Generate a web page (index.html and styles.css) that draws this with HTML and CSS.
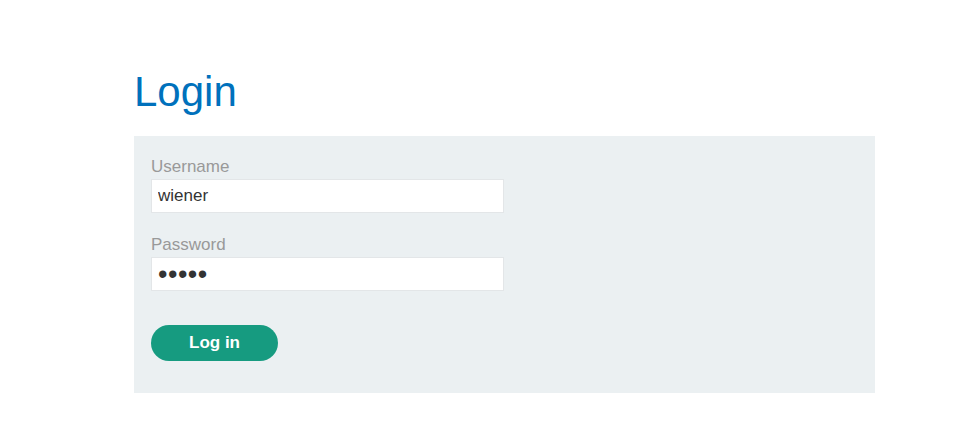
FILE: index.html
```html
<!DOCTYPE html>
<html lang="en">
<head>
<meta charset="utf-8">
<title>Login</title>
<link rel="stylesheet" href="styles.css">
</head>
<body>
<main class="container">
  <h1 class="title">Login</h1>
  <section class="panel">
    <form class="login-form">
      <label class="field-label" for="username">Username</label>
      <input class="field-input" id="username" type="text" value="wiener">
      <label class="field-label" for="password">Password</label>
      <input class="field-input field-password" id="password" type="password" value="peter">
      <button class="btn" type="button">Log in</button>
    </form>
  </section>
</main>
</body>
</html>
```
FILE: styles.css
```css
html, body {
  margin: 0;
  padding: 0;
  background: #ffffff;
  font-family: "Liberation Sans", Arial, sans-serif;
}

.container {
  margin-left: 134px;
  width: 741px;
  padding-top: 68px;
}

.title {
  margin: 0 0 20px 0;
  font-size: 42px;
  font-weight: normal;
  line-height: 48px;
  color: #0071bc;
}

.panel {
  background: #ebf0f2;
  padding: 21px 17px 32px 17px;
}

.login-form {
  display: flex;
  flex-direction: column;
  align-items: flex-start;
}

.field-label {
  display: block;
  font-size: 17px;
  line-height: 19px;
  color: #999999;
  margin-bottom: 3px;
}

.field-input {
  box-sizing: border-box;
  width: 353px;
  height: 34px;
  margin: 0 0 22px 0;
  padding: 0 6px;
  border: 1px solid #e3e6e8;
  background: #ffffff;
  font-family: "Liberation Sans", Arial, sans-serif;
  font-size: 17px;
  color: #333333;
  outline: none;
}

.field-password {
  margin-bottom: 34px;
  font-size: 27px;
  letter-spacing: 0.5px;
  padding-left: 6px;
}

.btn {
  box-sizing: border-box;
  width: 127px;
  height: 36px;
  border: none;
  border-radius: 18px;
  background: #169b80;
  color: #ffffff;
  font-family: "Liberation Sans", Arial, sans-serif;
  font-size: 17px;
  font-weight: bold;
  padding: 0;
  cursor: pointer;
}
```
